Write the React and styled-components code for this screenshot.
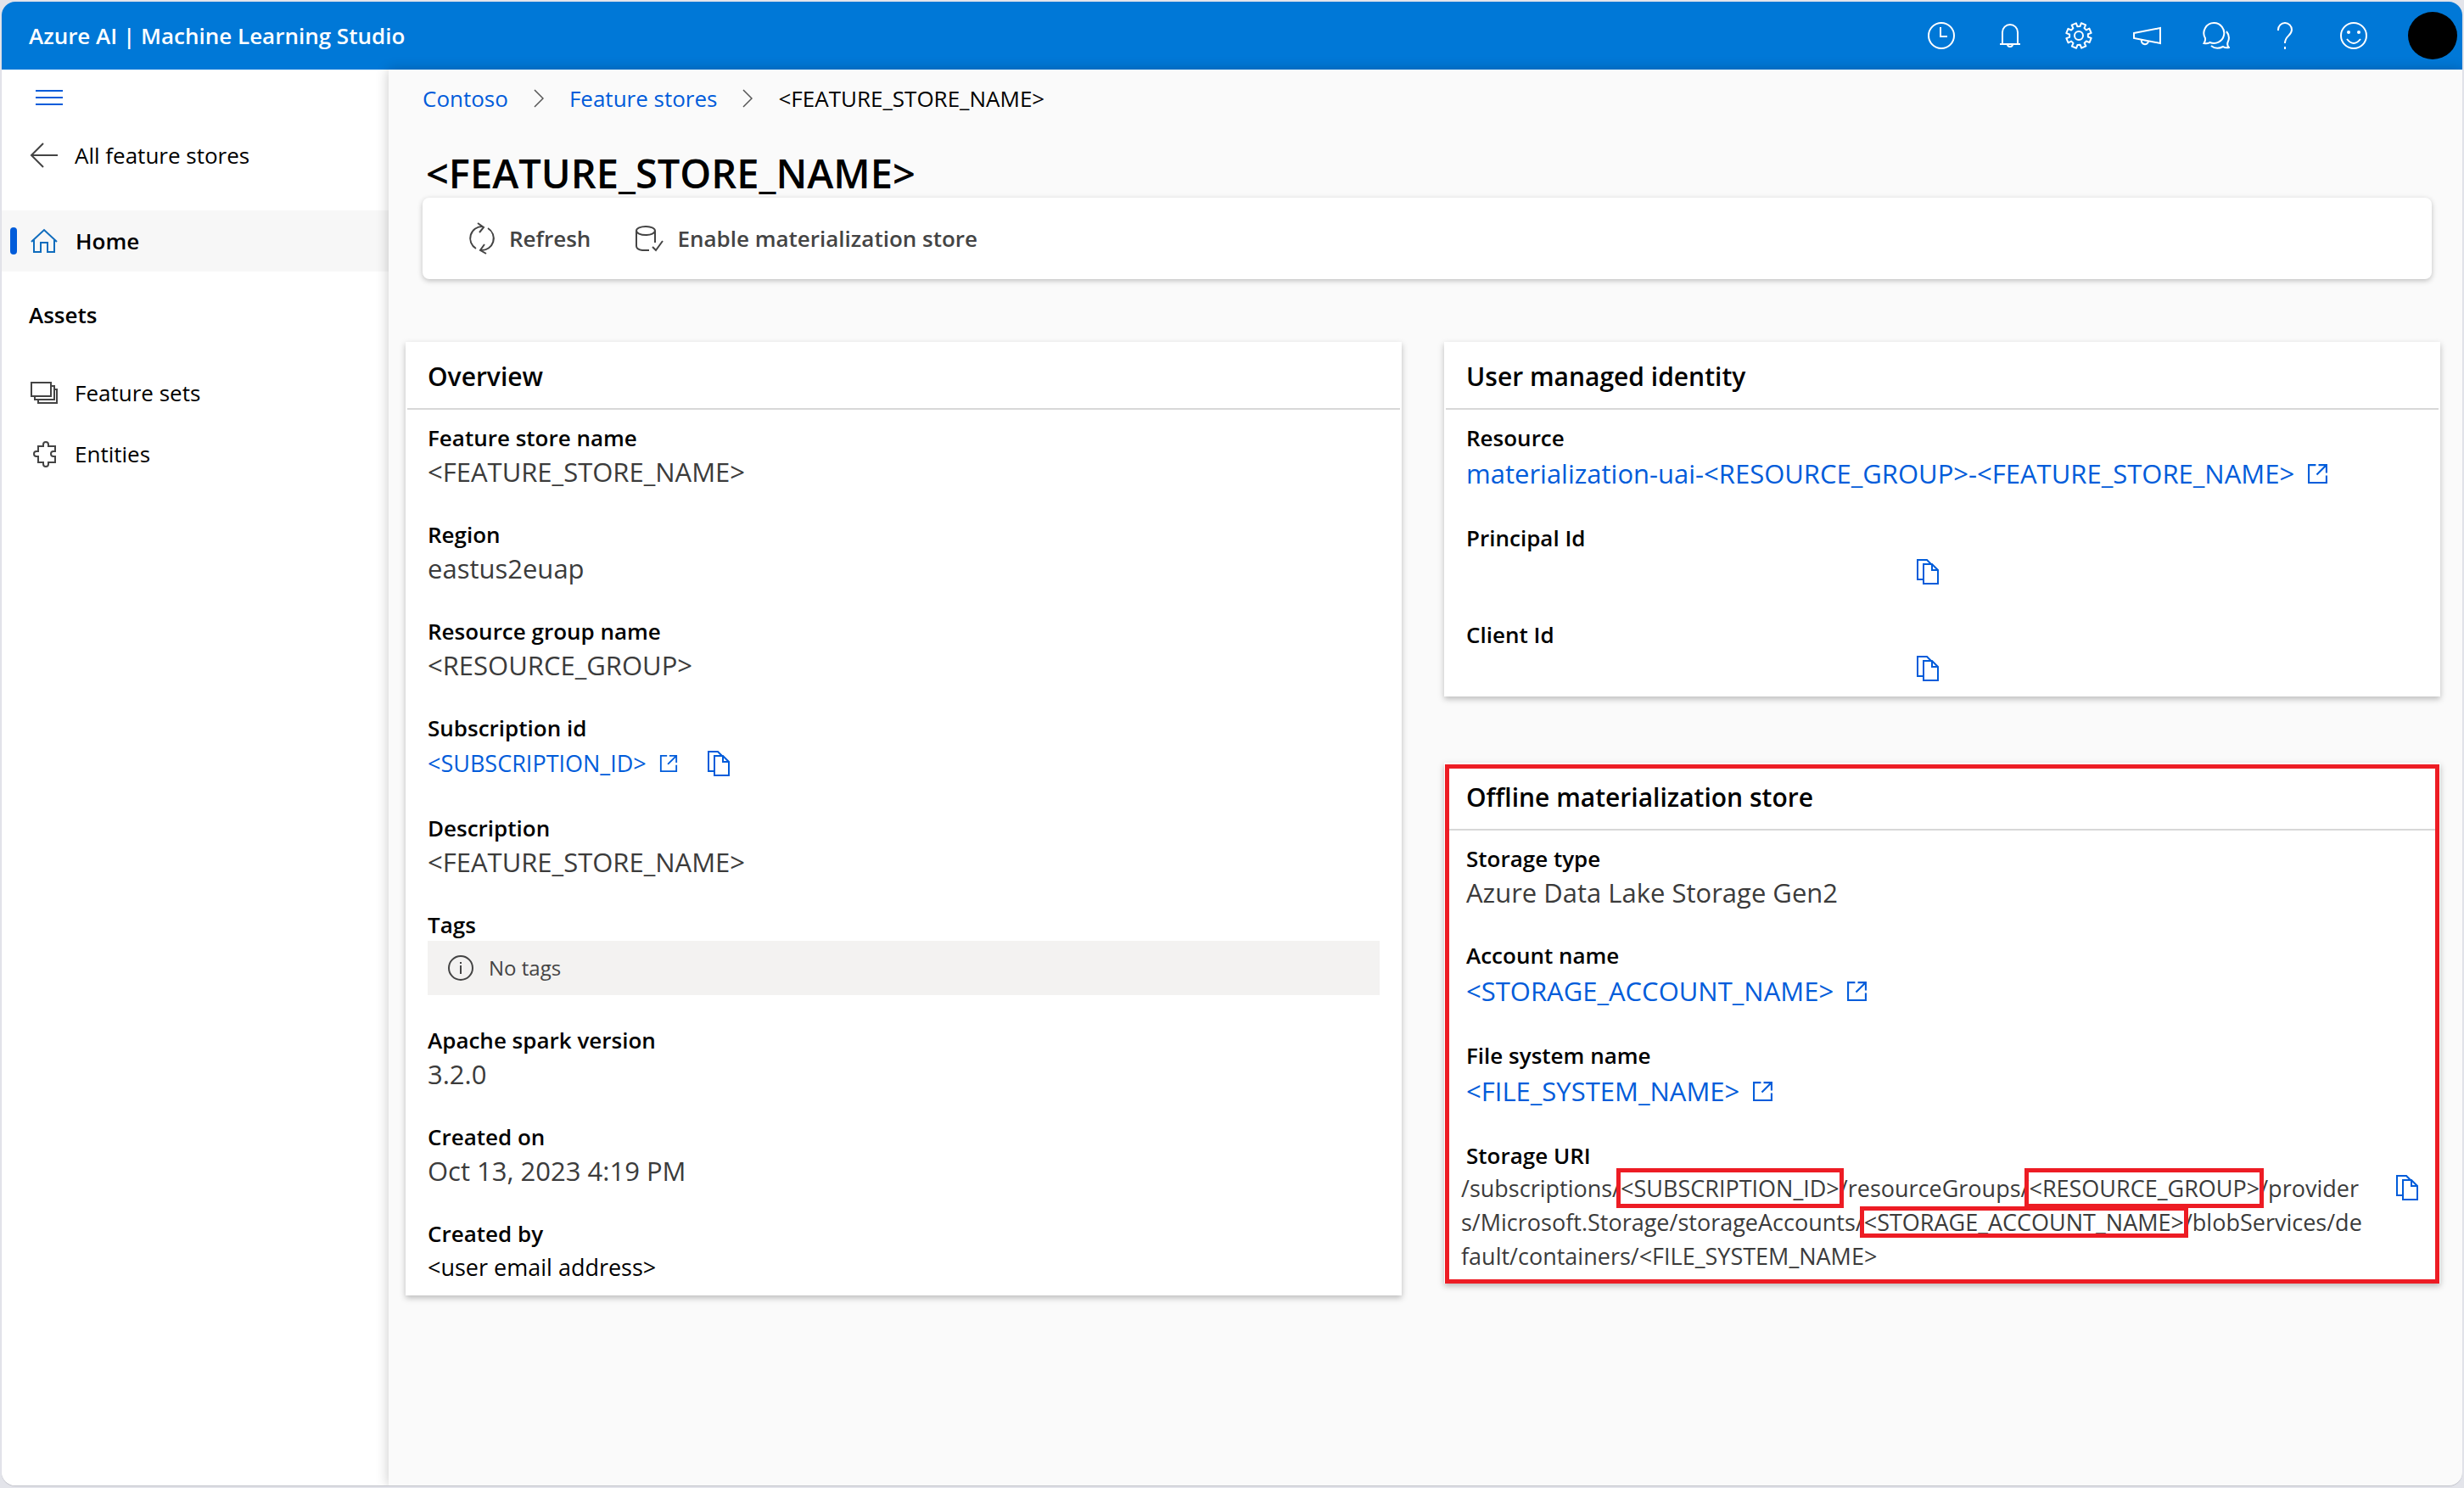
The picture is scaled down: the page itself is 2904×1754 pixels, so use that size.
import React from "react";
import styled, { createGlobalStyle } from "styled-components";

const GlobalStyle = createGlobalStyle`
  * {
    box-sizing: border-box;
  }

  body {
    margin: 0;
    padding: 2px 2px 3px;
    background: #e3e4ea;
    color: #000;
    font-family: "Open Sans", "Noto Sans", sans-serif;
    font-size: 27px;
    line-height: 38px;
  }

  a {
    color: inherit;
    text-decoration: none;
  }

  button {
    padding: 0;
    border: 0;
    background: none;
    color: inherit;
    font: inherit;
    cursor: pointer;
  }
`;

const Window = styled.div`
  display: flex;
  flex-direction: column;
  min-height: calc(100vh - 5px);
  overflow: hidden;
  border-radius: 16px;
  background: #fafafa;
  box-shadow: 0 1px 1px #bfc0c8;
`;

const TopBar = styled.header`
  display: flex;
  align-items: center;
  height: 80px;
  padding: 0 6px 0 32px;
  background: #0078d7;
  color: #fff;
`;

const Brand = styled.a`
  margin-right: auto;
  font-size: 26px;
  font-weight: 600;
`;

const TopButton = styled.button`
  display: flex;
  align-items: center;
  justify-content: center;
  width: 81px;
  height: 80px;
`;

const Avatar = styled.button`
  width: 58px;
  height: 56px;
  margin-left: 24px;
  border-radius: 50%;
  background: #000;
`;

const Body = styled.div`
  display: flex;
  flex: 1;
`;

const Sidebar = styled.nav`
  flex: 0 0 456px;
  background: #fff;
`;

const MenuButton = styled.button`
  display: flex;
  align-items: center;
  height: 65px;
  padding-left: 40px;
  color: #015cda;
`;

const NavItem = styled.a`
  display: flex;
  align-items: center;
  gap: 20px;
  height: 72px;
  padding-left: 32px;
  background: ${(props) => (props.$active ? "#f7f7f7" : "none")};
  font-weight: ${(props) => (props.$active ? 600 : 400)};
  font-size: 26px;

  svg {
    color: ${(props) => (props.$active ? "#0f6cbd" : "#444")};
  }

  &::before {
    content: "";
    display: ${(props) => (props.$active ? "block" : "none")};
    width: 8px;
    height: 32px;
    margin: 0 -5px 0 -22px;
    border-radius: 4px;
    background: #015cda;
  }
`;

const NavGroup = styled.div`
  margin-top: ${(props) => props.$top}px;
`;

const NavHeading = styled.h2`
  height: 72px;
  margin: 15px 0 20px;
  padding-left: 32px;
  font-size: 26px;
  font-weight: 600;
  line-height: 72px;
`;

const Main = styled.main`
  position: relative;
  flex: 1;
  min-width: 0;
  padding: 12px 26px 60px 20px;
  background: #fafafa;
  box-shadow: 0 0 14px rgba(0, 0, 0, 0.22);
`;

const Breadcrumb = styled.nav`
  display: flex;
  align-items: center;
  gap: 30px;
  height: 44px;
  padding-left: 20px;
  font-size: 26px;

  svg {
    color: #555;
  }
`;

const CrumbLink = styled.a`
  color: #015cda;
`;

const Title = styled.h1`
  margin: 38px 0 0;
  padding-left: 24px;
  font-size: 47px;
  font-weight: 600;
  line-height: 57px;
`;

const Toolbar = styled.div`
  display: flex;
  align-items: center;
  gap: 52px;
  height: 96px;
  margin: 0 10px 74px 20px;
  padding-left: 54px;
  border-radius: 8px;
  background: #fff;
  box-shadow: 0 2px 6px rgba(0, 0, 0, 0.24);
`;

const ToolButton = styled.button`
  display: flex;
  align-items: center;
  gap: 16px;
  color: #444;
  font-size: 26px;
  font-weight: 600;
`;

const Columns = styled.div`
  display: grid;
  grid-template-columns: 1fr 1fr;
  align-items: start;
  gap: 50px;
`;

const Stack = styled.div`
  display: grid;
  gap: 78px;
`;

const Card = styled.section`
  position: relative;
  background: #fff;
  box-shadow: 0 3px 7px rgba(0, 0, 0, 0.26);

  &::after {
    content: "";
    display: ${(props) => (props.$marked ? "block" : "none")};
    position: absolute;
    inset: 2px 1px 0;
    border: 5px solid #ed1c24;
    pointer-events: none;
  }
`;

const CardTitle = styled.h2`
  margin: 0 2px;
  padding: 4px 24px 0;
  border-bottom: 2px solid #d8d8d8;
  font-size: 30px;
  font-weight: 600;
  line-height: 74px;
`;

const Fields = styled.dl`
  display: grid;
  gap: 34px;
  margin: 0;
  padding: 14px 26px 12px;
`;

const Label = styled.dt`
  font-size: 26px;
  font-weight: 600;
  line-height: 38px;
`;

const Value = styled.dd`
  display: flex;
  align-items: center;
  gap: 35px;
  min-height: 42px;
  margin: 0;
  color: ${(props) => (props.$dark ? "#000" : "#3b3b3b")};
  font-size: ${(props) => (props.$small ? 27 : 31)}px;
  line-height: 42px;
`;

const ExternalLink = styled.a`
  display: flex;
  align-items: center;
  gap: 15px;
  height: 46px;
  color: #015cda;
`;

const CopyButton = styled.button`
  display: flex;
  color: #015cda;
`;

const HiddenId = styled.span`
  width: 496px;
`;

const TagsBox = styled.dd`
  display: flex;
  align-items: center;
  gap: 18px;
  height: 64px;
  margin: 0;
  padding-left: 24px;
  background: #f3f2f1;
  color: #444;
  font-size: 24px;
`;

const UriValue = styled.dd`
  display: flex;
  align-items: flex-start;
  justify-content: space-between;
  gap: 30px;
  margin: 0 0 0 -6px;
  color: #3b3b3b;
  font-size: 27px;
  line-height: 40px;

  ${CopyButton} {
    padding: 4px 0;
  }
`;

const UriText = styled.span`
  flex: 0 1 1064px;
  word-break: break-all;
`;

const Mark = styled.span`
  position: relative;

  &::after {
    content: "";
    position: absolute;
    inset: ${(props) => (props.$tight ? "0 -5px" : "-5px")};
    border: 5px solid #ed1c24;
    pointer-events: none;
  }
`;

function Icon({ width = 32, height = 32, box, stroke = 2, children }) {
  return (
    <svg
      width={width}
      height={height}
      viewBox={box || `0 0 ${width} ${height}`}
      fill="none"
      stroke="currentColor"
      strokeWidth={stroke}
      aria-hidden="true"
    >
      {children}
    </svg>
  );
}

const ClockIcon = () => (
  <Icon>
    <circle cx="16" cy="16" r="15" />
    <path d="M15 6v11h8" />
  </Icon>
);

const BellIcon = () => (
  <Icon>
    <path d="M4 26h24M7 26V12a9 9 0 0 1 18 0v14M13 26a3 3 0 0 0 6 0" />
  </Icon>
);

const GearIcon = () => {
  // eight teeth, two outer and two inner points each
  const points = [];
  for (let i = 0; i < 8; i++) {
    [
      [-14, 11],
      [-11, 15],
      [11, 15],
      [14, 11],
    ].forEach(([offset, radius]) => {
      const angle = ((i * 45 + offset + 22) * Math.PI) / 180;
      points.push(
        `${(16 + radius * Math.cos(angle)).toFixed(2)},${(
          16 +
          radius * Math.sin(angle)
        ).toFixed(2)}`
      );
    });
  }
  return (
    <Icon>
      <polygon points={points.join(" ")} strokeLinejoin="round" />
      <circle cx="16" cy="16" r="5" />
    </Icon>
  );
};

const MegaphoneIcon = () => (
  <Icon width={34}>
    <path d="M1 13l31-6v18L1 19zM10 21a4 4 0 0 0 8 2" />
  </Icon>
);

const ChatIcon = () => (
  <Icon>
    <path d="M13.500 1a12 12 0 1 1-5 23q-3 2-7 1 2-3 1.500-6A12 12 0 0 1 13.500 1z" />
    <path d="M28 11q5 6 1.500 13-1 4 1.500 6-4 1-7-1-8 4-14-1" />
  </Icon>
);

const HelpIcon = () => (
  <Icon>
    <path d="M8 10V9a8 8 0 1 1 16 0c0 7-8 7-8 16M16 29v3" />
  </Icon>
);

const SmileIcon = () => (
  <Icon>
    <circle cx="16" cy="16" r="15" />
    <path d="M8 20q8 10 16 0" />
    <g fill="currentColor" stroke="none">
      <circle cx="10" cy="12" r="2" />
      <circle cx="22" cy="12" r="2" />
    </g>
  </Icon>
);

const MenuIcon = () => (
  <Icon height={20}>
    <path d="M0 2h32M0 10h32M0 18h32" />
  </Icon>
);

const BackIcon = () => (
  <Icon width={34}>
    <path d="M34 16H3M17 2L3 16l14 14" />
  </Icon>
);

const HomeIcon = () => (
  <Icon width={34}>
    <path d="M2 17L17 3l15 14M5 15v14h8V18h8v11h8V15" />
  </Icon>
);

const LayersIcon = () => (
  <Icon width={34}>
    <path d="M3 4h23v16H3zM26 8h4v16H7v-4M30 12h3v16H11v-4" />
  </Icon>
);

const PuzzleIcon = () => (
  <Icon width={34}>
    <path d="M11 7h6V5a3 3 0 0 1 6 0v2h8v6h-2a3 3 0 0 0 0 6h2v7h-8v2a3 3 0 0 1-6 0v-2h-6v-7H9a3 3 0 0 1 0-6h2z" />
  </Icon>
);

const ChevronIcon = () => (
  <Icon width={12} height={22} stroke={1.5}>
    <path d="M1 1l10 10L1 21" />
  </Icon>
);

const RefreshIcon = () => (
  <Icon height={38}>
    <path d="M9 31A14 14 0 0 1 17 5M11 1l7 5-5 6M23 7a14 14 0 0 1-8 26M21 37l-7-4 5-7" />
  </Icon>
);

const DatabaseIcon = () => (
  <Icon width={34}>
    <ellipse cx="13" cy="7" rx="11" ry="5" />
    <path d="M2 7v18q0 4 7 5h8M24 7v14M21 26l4 4 8-11" />
  </Icon>
);

const InfoIcon = () => (
  <Icon width={30} height={30}>
    <circle cx="15" cy="15" r="14" />
    <path d="M15 12v10M15 8v2" />
  </Icon>
);

const OpenIcon = ({ size }) => (
  <Icon width={size} height={size} box="0 0 24 24">
    <path d="M10 2H2v20h20v-8M13 2h9v9M22 2L11 13" />
  </Icon>
);

const CopyIcon = () => (
  <Icon width={26} height={30}>
    <path d="M7 24H1V1h11l6 6" />
    <path d="M8 6h10l7 7v16H8zM18 6v7h7" />
  </Icon>
);

const topActions = [
  ["Recent", ClockIcon],
  ["Notifications", BellIcon],
  ["Settings", GearIcon],
  ["Announcements", MegaphoneIcon],
  ["Chat", ChatIcon],
  ["Help", HelpIcon],
  ["Feedback", SmileIcon],
];

function Copy({ label }) {
  return (
    <CopyButton type="button" aria-label={`Copy ${label}`}>
      <CopyIcon />
    </CopyButton>
  );
}

function Field({ label, children, ...rest }) {
  return (
    <div>
      <Label>{label}</Label>
      <Value {...rest}>{children}</Value>
    </div>
  );
}

function Overview() {
  return (
    <Card>
      <CardTitle>Overview</CardTitle>
      <Fields>
        <Field label="Feature store name">&lt;FEATURE_STORE_NAME&gt;</Field>
        <Field label="Region">eastus2euap</Field>
        <Field label="Resource group name">&lt;RESOURCE_GROUP&gt;</Field>
        <Field label="Subscription id" $small>
          <ExternalLink href="#subscription">
            &lt;SUBSCRIPTION_ID&gt; <OpenIcon size={22} />
          </ExternalLink>
          <Copy label="subscription id" />
        </Field>
        <Field label="Description">&lt;FEATURE_STORE_NAME&gt;</Field>
        <div>
          <Label>Tags</Label>
          <TagsBox>
            <InfoIcon />
            No tags
          </TagsBox>
        </div>
        <Field label="Apache spark version">3.2.0</Field>
        <Field label="Created on">Oct 13, 2023 4:19 PM</Field>
        <Field label="Created by" $small $dark>
          &lt;user email address&gt;
        </Field>
      </Fields>
    </Card>
  );
}

function Identity() {
  return (
    <Card>
      <CardTitle>User managed identity</CardTitle>
      <Fields>
        <Field label="Resource">
          <ExternalLink href="#identity">
            materialization-uai-&lt;RESOURCE_GROUP&gt;-&lt;FEATURE_STORE_NAME&gt;{" "}
            <OpenIcon size={25} />
          </ExternalLink>
        </Field>
        <Field label="Principal Id">
          <HiddenId />
          <Copy label="principal id" />
        </Field>
        <Field label="Client Id">
          <HiddenId />
          <Copy label="client id" />
        </Field>
      </Fields>
    </Card>
  );
}

function OfflineStore() {
  return (
    <Card $marked>
      <CardTitle>Offline materialization store</CardTitle>
      <Fields>
        <Field label="Storage type">Azure Data Lake Storage Gen2</Field>
        <Field label="Account name">
          <ExternalLink href="#account">
            &lt;STORAGE_ACCOUNT_NAME&gt; <OpenIcon size={25} />
          </ExternalLink>
        </Field>
        <Field label="File system name">
          <ExternalLink href="#filesystem">
            &lt;FILE_SYSTEM_NAME&gt; <OpenIcon size={25} />
          </ExternalLink>
        </Field>
        <div>
          <Label>Storage URI</Label>
          <UriValue>
            <UriText>
              /subscriptions/<Mark>&lt;SUBSCRIPTION_ID&gt;</Mark>
              /resourceGroups/<Mark>&lt;RESOURCE_GROUP&gt;</Mark>
              /providers/Microsoft.Storage/storageAccounts/
              <Mark $tight>&lt;STORAGE_ACCOUNT_NAME&gt;</Mark>
              /blobServices/default/containers/&lt;FILE_SYSTEM_NAME&gt;
            </UriText>
            <Copy label="storage URI" />
          </UriValue>
        </div>
      </Fields>
    </Card>
  );
}

function App() {
  return (
    <>
      <GlobalStyle />
      <Window>
        <TopBar>
          <Brand href="#studio">Azure AI | Machine Learning Studio</Brand>
          {topActions.map(([label, ActionIcon]) => (
            <TopButton key={label} type="button" aria-label={label}>
              <ActionIcon />
            </TopButton>
          ))}
          <Avatar type="button" aria-label="Account" />
        </TopBar>
        <Body>
          <Sidebar aria-label="Workspace">
            <MenuButton type="button" aria-label="Toggle menu">
              <MenuIcon />
            </MenuButton>
            <NavItem href="#stores">
              <BackIcon />
              All feature stores
            </NavItem>
            <NavGroup $top={29}>
              <NavItem href="#home" $active>
                <HomeIcon />
                Home
              </NavItem>
            </NavGroup>
            <NavHeading>Assets</NavHeading>
            <NavItem href="#sets">
              <LayersIcon />
              Feature sets
            </NavItem>
            <NavItem href="#entities">
              <PuzzleIcon />
              Entities
            </NavItem>
          </Sidebar>
          <Main>
            <Breadcrumb aria-label="Breadcrumb">
              <CrumbLink href="#contoso">Contoso</CrumbLink>
              <ChevronIcon />
              <CrumbLink href="#stores">Feature stores</CrumbLink>
              <ChevronIcon />
              <span>&lt;FEATURE_STORE_NAME&gt;</span>
            </Breadcrumb>
            <Title>&lt;FEATURE_STORE_NAME&gt;</Title>
            <Toolbar>
              <ToolButton type="button">
                <RefreshIcon />
                Refresh
              </ToolButton>
              <ToolButton type="button">
                <DatabaseIcon />
                Enable materialization store
              </ToolButton>
            </Toolbar>
            <Columns>
              <Overview />
              <Stack>
                <Identity />
                <OfflineStore />
              </Stack>
            </Columns>
          </Main>
        </Body>
      </Window>
    </>
  );
}

export default App;
